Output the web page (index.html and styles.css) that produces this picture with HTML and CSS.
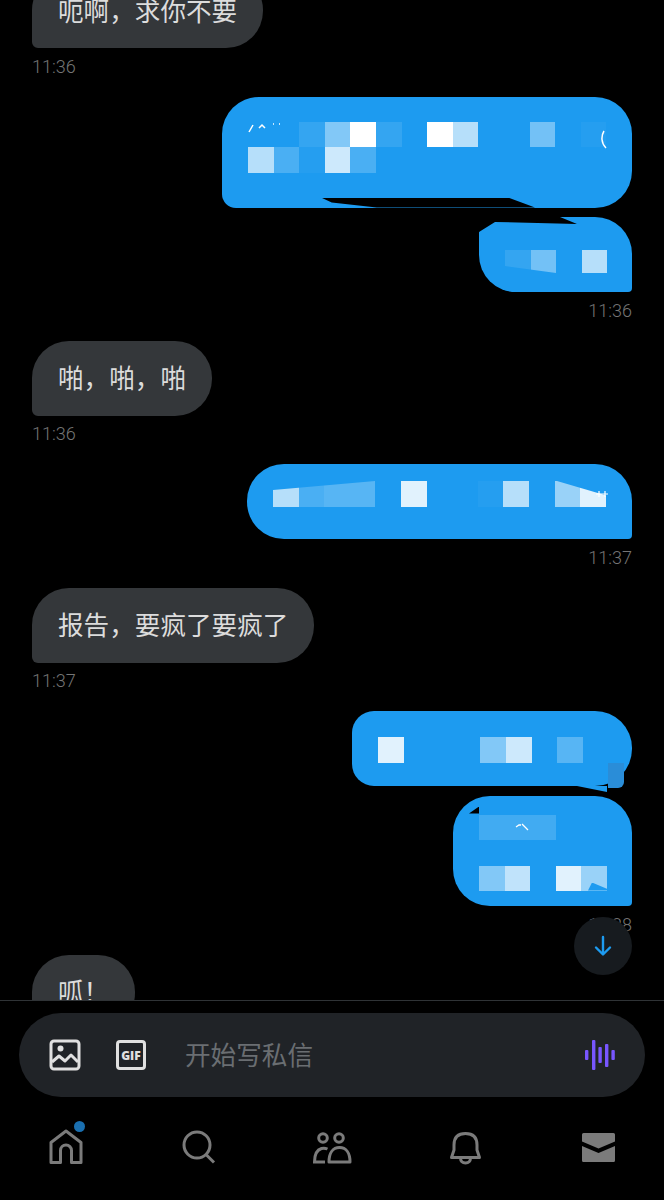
FILE: index.html
```html
<!DOCTYPE html>
<html lang="zh">
<head>
<meta charset="utf-8">
<title>私信</title>
<link rel="stylesheet" href="styles.css">
</head>
<body>
<main class="thread">
  <div class="in b-first">呃啊，求你不要</div>
  <div class="time">11:36</div>

  <div class="out b1">
    <div class="mosaic">
      <i class="l0"></i><i class="l0"></i><i class="l1"></i><i class="l2"></i><i class="l5"></i><i class="l1"></i><i class="l0"></i><i class="l5"></i><i class="l3"></i><i class="l0"></i><i class="l0"></i><i class="l2a"></i><i class="l0"></i><i class="l0a"></i>
      <i class="l3"></i><i class="l1a"></i><i class="l0a"></i><i class="l4"></i><i class="l1a"></i>
    </div>
    <span class="notch n1"></span>
    <svg class="marks m1" viewBox="0 0 360 30" width="360" height="30" fill="none" stroke="#fff" stroke-width="1.500">
      <path d="M1 10l4-7M11 6l3-3 3 3M25 2h1M31 2h1M356 9c-3 5-3 12 2 17"/>
    </svg>
  </div>
  <div class="out b2">
    <div class="mosaic">
      <i class="l1"></i><i class="l2a"></i><i class="l0"></i><i class="l3"></i>
    </div>
    <span class="notch n2"></span>
    <span class="patch p2"></span>
  </div>
  <div class="time end">11:36</div>

  <div class="in">啪，啪，啪</div>
  <div class="time">11:36</div>

  <div class="out b3">
    <div class="mosaic">
      <i class="l3"></i><i class="l1a"></i><i class="l1b"></i><i class="l1b"></i><i class="l0"></i><i class="l4b"></i><i class="l0"></i><i class="l0"></i><i class="l0a"></i><i class="l3"></i><i class="l0"></i><i class="l2x"></i><i class="l4b"></i>
    </div>
    <span class="patch p3a"></span>
    <span class="patch p3b"></span>
    <svg class="marks m3" viewBox="0 0 14 10" width="14" height="10" fill="none" stroke="#fff" stroke-width="1.200">
      <path d="M1 5h6M4 2v6M7 5h6M10 2v6"/>
    </svg>
  </div>
  <div class="time end">11:37</div>

  <div class="in">报告，要疯了要疯了</div>
  <div class="time">11:37</div>

  <div class="out b4">
    <div class="mosaic">
      <i class="l4b"></i><i class="l0"></i><i class="l0"></i><i class="l0"></i><i class="l2"></i><i class="l4"></i><i class="l0"></i><i class="l1b"></i>
    </div>
    <span class="tail"></span>
    <span class="smudge"></span>
  </div>
  <div class="out b5">
    <div class="mosaic five">
      <i class="l1c"></i><i class="l1c"></i><i class="l1c"></i><i class="l0"></i><i class="l0"></i>
      <i class="l0"></i><i class="l0"></i><i class="l0"></i><i class="l0"></i><i class="l0"></i>
      <i class="l2"></i><i class="l3b"></i><i class="l0"></i><i class="l4b"></i><i class="l2x"></i>
    </div>
    <span class="notch n5"></span>
    <span class="patch p5"></span>
    <svg class="marks m5" viewBox="0 0 14 8" width="14" height="8" fill="none" stroke="#fff" stroke-width="1.300">
      <path d="M1 4l3-2 2 0M7 1l6 6"/>
    </svg>
  </div>
  <div class="time end">11:38</div>

  <div class="in">呱！</div>
</main>

<button class="scroll-down" type="button" aria-label="scroll to bottom">
  <svg viewBox="0 0 24 24" width="24" height="24"><path d="M12 3v17M5 13.500l7 7 7-7" fill="none" stroke="#1d9bf0" stroke-width="2.400" stroke-linecap="round" stroke-linejoin="round"/></svg>
</button>

<section class="composer-wrap">
  <div class="composer">
    <svg class="tool" viewBox="0 0 32 32" width="32" height="32">
      <rect x="2" y="2" width="28" height="28" rx="3" fill="none" stroke="#e0e0e0" stroke-width="3"/>
      <circle cx="11.500" cy="9.500" r="3" fill="#e0e0e0"/>
      <path d="M3 23l7-6 6 5 6-6 7 7" fill="none" stroke="#e0e0e0" stroke-width="3" stroke-linejoin="round"/>
    </svg>
    <div class="gif">GIF</div>
    <div class="placeholder">开始写私信</div>
    <svg class="voice" viewBox="0 0 32 32" width="32" height="32" fill="#7856ff">
      <rect x="1" y="11" width="3.400" height="10" rx="1"/>
      <rect x="8" y="1" width="3.400" height="30" rx="1"/>
      <rect x="14.400" y="8" width="3.400" height="16" rx="1"/>
      <rect x="21" y="5" width="3.400" height="23" rx="1"/>
      <rect x="27.400" y="11" width="3.400" height="10" rx="1"/>
    </svg>
  </div>
</section>

<nav class="nav">
  <div class="nav-item">
    <svg viewBox="0 0 40 40" width="40" height="40" fill="none" stroke="#7b7b7b" stroke-width="3">
      <path d="M5 34.500V14.500L20 3l15 11.500v20H25.500V22.500a5.500 5.500 0 0 0-11 0V34.500z" stroke-linejoin="round"/>
    </svg>
    <span class="dot"></span>
  </div>
  <div class="nav-item">
    <svg viewBox="0 0 40 40" width="40" height="40" fill="none" stroke="#7b7b7b" stroke-width="3">
      <circle cx="18" cy="17" r="13"/>
      <path d="M27 26.500l8 8"/>
    </svg>
  </div>
  <div class="nav-item">
    <svg viewBox="0 0 40 40" width="40" height="40" fill="none" stroke="#7b7b7b" stroke-width="3">
      <circle cx="11" cy="10" r="4.300"/>
      <circle cx="27" cy="10" r="4.300"/>
      <path d="M13 34H2.500c0-7 2-12 7-13.500 2-.6 4-.4 6 .5"/>
      <path d="M17 34c0-9 4-14.500 10.500-14.500S38 25 38 34z" stroke-linejoin="round"/>
    </svg>
  </div>
  <div class="nav-item">
    <svg viewBox="0 0 40 40" width="40" height="40" fill="none" stroke="#7b7b7b" stroke-width="3">
      <path d="M9 22V17C9 9 13.500 5.500 20.500 5.500S32 9 32 17v5l2.500 7.500H6.500z" stroke-linejoin="round"/>
      <path d="M15.500 30c0 3 2 5 5 5s5-2 5-5"/>
    </svg>
  </div>
  <div class="nav-item">
    <svg viewBox="0 0 40 40" width="40" height="40" fill="#7b7b7b">
      <path d="M4 6.500A1.500 1.500 0 0 1 5.500 5h30A1.500 1.500 0 0 1 37 6.500V13.500l-16.500 7L4 13.500z"/>
      <path d="M4 18l16.500 7L37 18v14.500a1.500 1.500 0 0 1-1.500 1.500h-30A1.500 1.500 0 0 1 4 32.500z"/>
    </svg>
  </div>
</nav>
</body>
</html>
```
FILE: styles.css
```css
* { box-sizing: border-box; }
html, body { margin: 0; padding: 0; background: #000; }
body {
  position: relative;
  width: 664px;
  height: 1200px;
  overflow: hidden;
  font-family: "Noto Sans CJK SC", "Noto Sans", sans-serif;
}
.thread {
  height: 1000px;
  overflow: hidden;
  padding: 0 32px;
  display: flex;
  flex-direction: column;
  align-items: flex-start;
}
.in {
  flex: none;
  height: 75px;
  padding: 0 26px 3px;
  display: flex;
  align-items: center;
  font-size: 25.600px;
  font-weight: 400;
  color: #dcdcdc;
  background: #34373a;
  border-radius: 37px 37px 37px 6px;
}
.b-first { margin-top: -27px; }
.time {
  flex: none;
  margin-top: 6.500px;
  margin-bottom: 18px;
  height: 24px;
  line-height: 24px;
  font-family: "Roboto", "Liberation Sans", sans-serif;
  font-weight: 300;
  font-size: 18px;
  color: #757575;
}
.time.end { align-self: flex-end; }
.out {
  flex: none;
  position: relative;
  align-self: flex-end;
  background: #1d9bf0;
  border-radius: 37px 37px 6px 37px;
}
.out + .out { margin-top: 9.500px; }
.b1 { width: 410px; height: 111px; padding: 25px 0 0 26px; border-radius: 37px 37px 37px 14px; }
.b2 { width: 153px; height: 75px; padding: 33px 0 0 26px; border-radius: 16px 37px 4px 37px; }
.b3 { width: 385px; height: 75px; padding: 17px 0 0 26px; border-radius: 37px 37px 4px 37px; }
.b4 { width: 280px; height: 75px; padding: 26px 0 0 26px; border-radius: 22px 37px 37px 22px; }
.b5 { width: 179px; height: 110.500px; padding: 19px 0 0 26px; border-radius: 37px 37px 4px 37px; }
.mosaic {
  display: grid;
  grid-template-columns: repeat(14, 25.600px);
  grid-auto-rows: 25.600px;
}
.mosaic.five { grid-template-columns: repeat(5, 25.600px); }
.mosaic i { display: block; }
.l0 { background: transparent; }
.l0a { background: rgba(255, 255, 255, .04); }
.l1 { background: rgba(255, 255, 255, .1); }
.l1a { background: rgba(255, 255, 255, .2); }
.l1c { background: rgba(255, 255, 255, .16); }
.l1b { background: rgba(255, 255, 255, .26); }
.l2a { background: rgba(255, 255, 255, .38); }
.l2 { background: rgba(255, 255, 255, .45); }
.l2x { background: rgba(255, 255, 255, .55); }
.l3 { background: rgba(255, 255, 255, .68); }
.l3b { background: rgba(255, 255, 255, .72); }
.l4 { background: rgba(255, 255, 255, .78); }
.l4b { background: rgba(255, 255, 255, .87); }
.l5 { background: #fff; }
.notch { position: absolute; background: #000; display: block; }
.n1 { left: 99px; top: 101px; width: 214px; height: 10px; clip-path: polygon(0 0, 87.400% 0, 100% 100%, 26% 100%, 5% 50%); }
.n2 { left: 0; top: 0; width: 100px; height: 16px; clip-path: polygon(0 0, 81% 0, 98% 44%, 16% 31%, 0 94%); }
.n5 { left: 16px; top: 11px; width: 10px; height: 7px; clip-path: polygon(100% 0, 100% 100%, 0 100%); }
.patch { position: absolute; display: block; background: #1d9bf0; }
.p2 { left: 26px; top: 49px; width: 102px; height: 10px; clip-path: polygon(0 0, 50% 70%, 100% 70%, 100% 100%, 0 100%); }
.p3a { left: 26px; top: 17px; width: 102px; height: 9px; clip-path: polygon(0 0, 100% 0, 0 100%); }
.p3b { left: 310px; top: 17px; width: 51px; height: 15px; clip-path: polygon(0 0, 100% 0, 100% 100%); }
.p5 { left: 135px; top: 87px; width: 20px; height: 8px; clip-path: polygon(0 100%, 20% 0, 100% 85%, 100% 100%); }
.marks { position: absolute; display: block; }
.m1 { left: 26px; top: 25px; }
.m3 { left: 348px; top: 25px; }
.m5 { left: 62px; top: 27px; }
.tail {
  position: absolute;
  display: block;
  left: 225px;
  top: 75px;
  width: 30px;
  height: 6px;
  background: #1d9bf0;
  clip-path: polygon(0 0, 100% 0, 100% 100%);
}
.smudge {
  position: absolute;
  display: block;
  left: 256px;
  top: 52px;
  width: 16px;
  height: 25px;
  background: #2a8dd8;
  border-radius: 0 0 6px 0;
}
.scroll-down {
  position: absolute;
  left: 574px;
  top: 917px;
  width: 58px;
  height: 58px;
  padding: 0;
  border: 0;
  border-radius: 50%;
  background: #171b1f;
  display: flex;
  align-items: center;
  justify-content: center;
}
.composer-wrap {
  height: 110px;
  padding: 12px 19px 0;
  border-top: 1px solid #2f3336;
}
.composer {
  height: 84px;
  border-radius: 42px;
  background: #202327;
  display: flex;
  align-items: center;
  padding: 0 29px 0 30px;
}
.tool { flex: none; }
.gif {
  flex: none;
  width: 30px;
  height: 30px;
  margin-left: 35px;
  border: 3px solid #e0e0e0;
  border-radius: 4px;
  display: flex;
  align-items: center;
  justify-content: center;
  font-family: "Open Sans", "Liberation Sans", sans-serif;
  font-weight: 800;
  font-size: 12px;
  color: #e0e0e0;
}
.placeholder {
  flex: 1;
  margin-left: 39px;
  padding-bottom: 4px;
  font-size: 25.600px;
  font-weight: 400;
  color: #6a6e72;
}
.voice { flex: none; }
.nav {
  height: 89px;
  display: grid;
  grid-template-columns: repeat(5, 1fr);
  align-items: start;
  padding-top: 18px;
}
.nav-item {
  position: relative;
  display: flex;
  justify-content: center;
}
.dot {
  position: absolute;
  left: 74px;
  top: -7px;
  width: 11px;
  height: 11px;
  border-radius: 50%;
  background: #1a6fb0;
}
```
